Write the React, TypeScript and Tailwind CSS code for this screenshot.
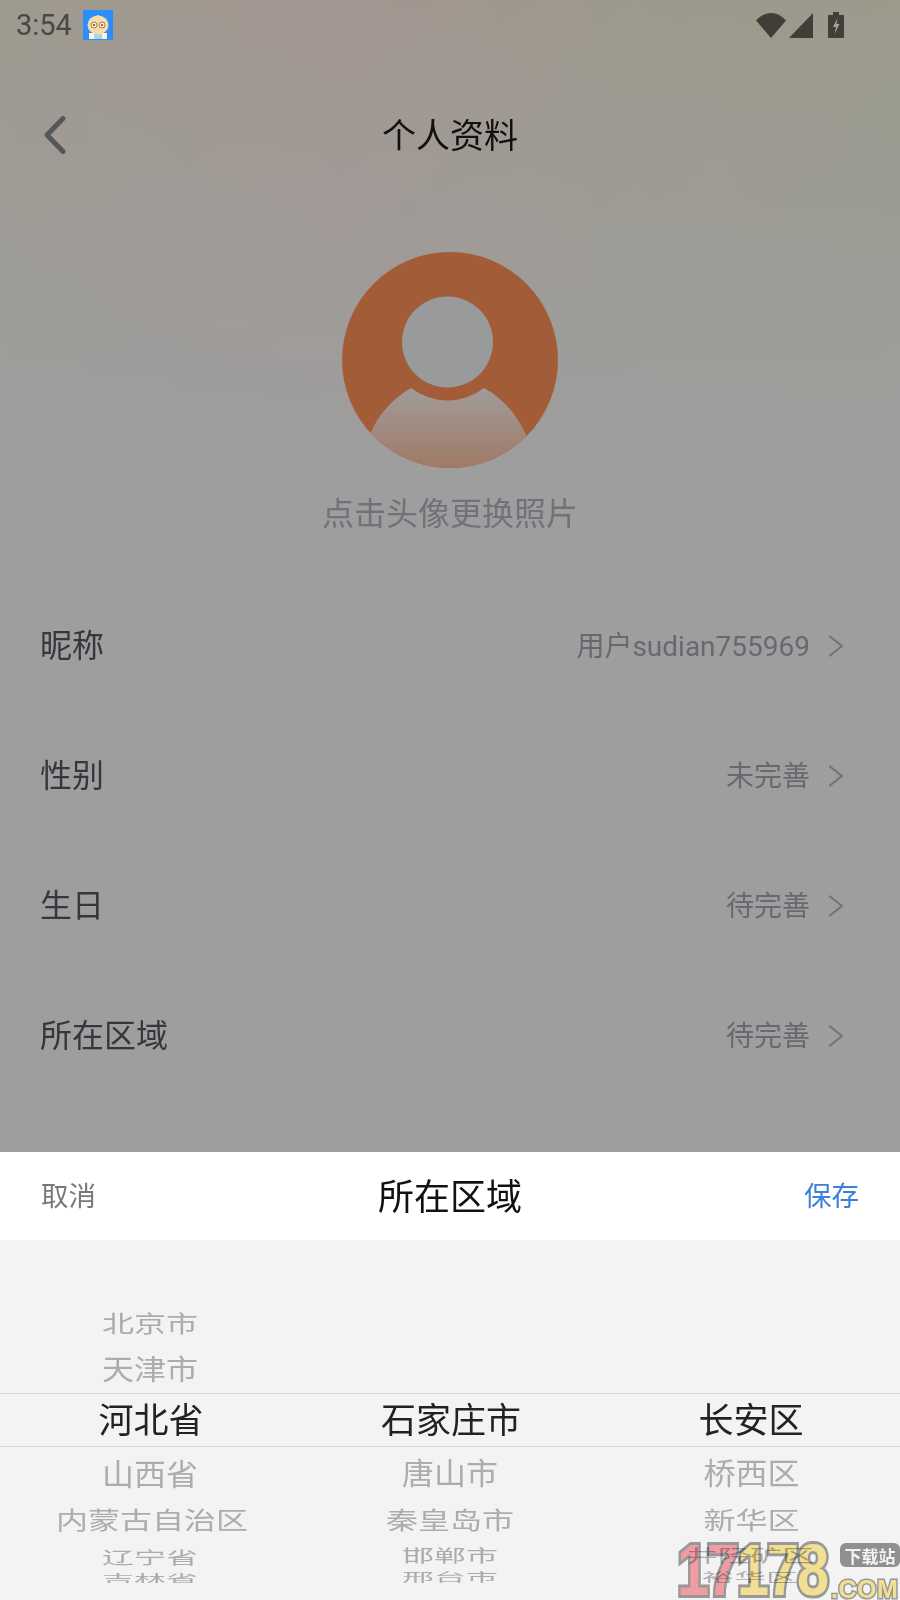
const font = '[font-family:Roboto,"Noto_Sans_CJK_SC",sans-serif]';

const rows = [
  { label: '昵称', value: '用户sudian755969' },
  { label: '性别', value: '未完善' },
  { label: '生日', value: '待完善' },
  { label: '所在区域', value: '待完善' },
];

const wheels = [
  {
    top: 'pt-[60px]',
    selected: '河北省',
    above: [
      { text: '北京市', box: 'h-[47px]', squash: 'scale-y-[0.72]' },
      { text: '天津市', box: 'h-[46px]', squash: 'scale-y-[0.9]' },
    ],
    below: [
      { text: '山西省', box: 'h-[55px] pt-[3px]', squash: 'scale-y-[0.94]' },
      { text: '内蒙古自治区', box: 'h-[40px] pl-[4px]', squash: 'scale-y-[0.74]' },
      { text: '辽宁省', box: 'h-[34px]', squash: 'scale-y-[0.54]' },
      { text: '吉林省', box: 'h-[10px]', squash: 'scale-y-[0.38]' },
    ],
  },
  {
    top: 'pt-[153px]',
    selected: '石家庄市',
    above: [],
    below: [
      { text: '唐山市', box: 'h-[52px] pt-[3px]', squash: 'scale-y-[0.94]' },
      { text: '秦皇岛市', box: 'h-[42px] pt-[3px]', squash: 'scale-y-[0.74]' },
      { text: '邯郸市', box: 'h-[32px]', squash: 'scale-y-[0.54]' },
      { text: '邢台市', box: 'h-[12px]', squash: 'scale-y-[0.38]' },
    ],
  },
  {
    top: 'pt-[153px]',
    selected: '长安区',
    above: [],
    below: [
      { text: '桥西区', box: 'h-[52px] pt-[3px] pl-[3px]', squash: 'scale-y-[0.94]' },
      { text: '新华区', box: 'h-[42px] pt-[3px] pl-[3px]', squash: 'scale-y-[0.74]' },
      { text: '井陉矿区', box: 'h-[32px]', squash: 'scale-y-[0.54]' },
      { text: '裕华区', box: 'h-[12px]', squash: 'scale-y-[0.38]' },
    ],
  },
];

function WheelRow({ text, box, squash }: { text: string; box: string; squash: string }) {
  return (
    <div className={`flex items-center justify-center text-[32px] leading-none text-[#acacac] ${box}`}>
      <span className={`block whitespace-nowrap ${squash}`}>{text}</span>
    </div>
  );
}

function AppIcon() {
  return (
    <svg width="30" height="30" viewBox="0 0 30 30">
      <rect width="30" height="30" fill="#2c8dfb" />
      <path d="M6 23h5v6H6zM19 23h5v6h-5z" fill="#fff3d0" />
      <path d="M11 24h8v5h-8z" fill="#a9d4f2" />
      <ellipse cx="15" cy="15" rx="10.500" ry="9.500" fill="#f6dca8" />
      <path d="M13 6.500q2-3 4 0z" fill="#f6dca8" />
      <circle cx="11" cy="15" r="3" fill="#fbeecb" stroke="#8a6a3c" strokeWidth="0.8" />
      <circle cx="19" cy="15" r="3" fill="#fbeecb" stroke="#8a6a3c" strokeWidth="0.8" />
      <circle cx="11" cy="15" r="1" fill="#6b4a20" />
      <circle cx="19" cy="15" r="1" fill="#6b4a20" />
    </svg>
  );
}

function Chevron() {
  return (
    <svg width="16" height="22" viewBox="0 0 16 22" fill="none">
      <path d="M2 1.500 14 11 2 20.500" stroke="#70737a" strokeWidth="2.200" strokeLinecap="round" strokeLinejoin="round" />
    </svg>
  );
}

function Avatar() {
  return (
    <svg width="216" height="216" viewBox="0 0 216 216">
      <defs>
        <linearGradient id="body" x1="0" y1="0" x2="0" y2="1">
          <stop offset="0" stopColor="#a19b9a" />
          <stop offset="1" stopColor="#a07a66" />
        </linearGradient>
        <clipPath id="disc">
          <circle cx="108" cy="108" r="108" />
        </clipPath>
      </defs>
      <g clipPath="url(#disc)">
        <rect width="216" height="216" fill="#a25c38" />
        <path d="M29 180C38 160 52 146 69 136A60 60 0 0 0 142 136C160 146 175 162 184 183L190 216H20Z" fill="url(#body)" />
      </g>
      <circle cx="105.500" cy="90" r="45.500" fill="#989a9c" />
    </svg>
  );
}

function Watermark() {
  const digit = 'inline-block w-[30px] text-center';
  const edge = '[-webkit-text-stroke:6px_#a0a0a0] [paint-order:stroke_fill]';
  return (
    <div className="absolute bottom-0 right-0 h-[60px] w-[227px] overflow-hidden mix-blend-multiply [font-family:'Liberation_Sans',sans-serif]">
      <div className={`absolute left-0 top-[-8px] flex text-[72px] font-bold leading-[76px] ${edge}`}>
        <span className={`${digit} text-[#fba4ab]`}>
          <span className="inline-block scale-x-[0.8]">1</span>
        </span>
        <span className={`${digit} text-[#fba4ab]`}>
          <span className="inline-block scale-x-[0.8]">7</span>
        </span>
        <span className={`${digit} text-[#fdeb9a]`}>
          <span className="inline-block scale-x-[0.8]">1</span>
        </span>
        <span className={`${digit} text-[#fdeb9a]`}>
          <span className="inline-block scale-x-[0.8]">7</span>
        </span>
        <span className={`${digit} text-[#fdeb9a]`}>
          <span className="inline-block scale-x-[0.8]">8</span>
        </span>
      </div>
      <div className="absolute right-0 top-[3px] flex h-[24px] w-[60px] items-center justify-center rounded-[6px] bg-[#979797] text-[17px] font-bold leading-none text-white [font-family:'Noto_Sans_CJK_SC',sans-serif]">
        下载站
      </div>
      <div className="absolute left-[158px] top-[37px] text-[25px] font-bold leading-none tracking-[0.5px] text-[#fdeb9a] [-webkit-text-stroke:3px_#a0a0a0] [paint-order:stroke_fill]">
        .COM
      </div>
    </div>
  );
}

export default function App() {
  return (
    <div
      className={`relative flex h-[1600px] w-[900px] flex-col overflow-hidden bg-[linear-gradient(to_bottom,rgba(158,158,158,0)_0px,rgba(158,158,158,1)_460px),linear-gradient(90deg,#9e9a8f_0%,#a39690_38%,#9d998d_70%,#9b9a8b_100%)] ${font}`}
    >
      {/* status bar */}
      <div className="flex h-[50px] shrink-0 items-center pl-[16px] pr-[56px]">
        <span className="text-[29px] leading-none text-[#4a4845]">3:54</span>
        <span className="ml-[11px] block">
          <AppIcon />
        </span>
        <div className="ml-auto flex items-end gap-[3px]">
          <svg width="30" height="25" viewBox="0 0 30 25">
            <path d="M15 25 0 7.500C4 3 9 0 15 0s11 3 15 7.500Z" fill="#3f3e37" />
          </svg>
          <svg width="24" height="25" viewBox="0 0 24 25">
            <path d="M24 0v25H0Z" fill="#3f3e37" />
          </svg>
          <svg className="ml-[12px]" width="16" height="26" viewBox="0 0 16 26">
            <path d="M5 0h6v3h4a1 1 0 0 1 1 1v21a1 1 0 0 1-1 1H1a1 1 0 0 1-1-1V4a1 1 0 0 1 1-1h4Z" fill="#3f3e37" />
            <path d="M9.500 6 5 15h3l-1.500 7L11.500 12h-3Z" fill="#a5a598" />
          </svg>
        </div>
      </div>

      {/* nav */}
      <div className="relative flex h-[170px] shrink-0 items-center justify-center pt-[2px]">
        <svg className="absolute left-[43px] top-[66px]" width="24" height="38" viewBox="0 0 24 38" fill="none">
          <path d="M20 2.500 4 19l16 16.500" stroke="#55565a" strokeWidth="5" strokeLinecap="round" strokeLinejoin="round" />
        </svg>
        <h1 className="text-[34px] font-normal leading-none text-[#111]">个人资料</h1>
      </div>

      {/* avatar */}
      <div className="mt-[32px] flex flex-col items-center">
        <Avatar />
        <p className="mt-[24px] text-[32px] leading-[44px] text-[#6f7278]">点击头像更换照片</p>
      </div>

      {/* fields */}
      <div className="mt-[44px] flex flex-col">
        {rows.map((row) => (
          <div key={row.label} className="flex h-[130px] items-center justify-between pl-[40px] pr-[56px] pt-[2px]">
            <span className="text-[32px] leading-none text-[#35373c]">{row.label}</span>
            <span className="flex items-center gap-[18px]">
              <span className="pt-[2px] text-[28px] leading-none text-[#666970]">{row.value}</span>
              <Chevron />
            </span>
          </div>
        ))}
      </div>

      {/* bottom sheet */}
      <div className="absolute inset-x-0 bottom-0 h-[448px] bg-[#f3f3f3]">
        <div className="flex h-[88px] items-center justify-between bg-white px-[41px] pt-[2px]">
          <span className="text-[27.500px] leading-none text-[#77787c]">取消</span>
          <span className="pt-[2px] text-[36px] leading-none text-[#111]">所在区域</span>
          <span className="text-[27.500px] leading-none text-[#3d80d8]">保存</span>
        </div>
        <div className="relative h-[360px]">
          <div className="absolute inset-x-0 top-[153px] h-[54px] border-y border-[#d9d9d9]" />
          <div className="grid h-[343px] grid-cols-3 overflow-hidden">
            {wheels.map((wheel) => (
              <div key={wheel.selected} className={`flex flex-col ${wheel.top}`}>
                {wheel.above.map((item) => (
                  <WheelRow key={item.text} {...item} />
                ))}
                <div className="flex h-[53px] items-center justify-center pl-[2px] pt-[4px] text-[35px] leading-none text-[#222]">
                  {wheel.selected}
                </div>
                {wheel.below.map((item) => (
                  <WheelRow key={item.text} {...item} />
                ))}
              </div>
            ))}
          </div>
        </div>
      </div>

      <Watermark />
    </div>
  );
}
